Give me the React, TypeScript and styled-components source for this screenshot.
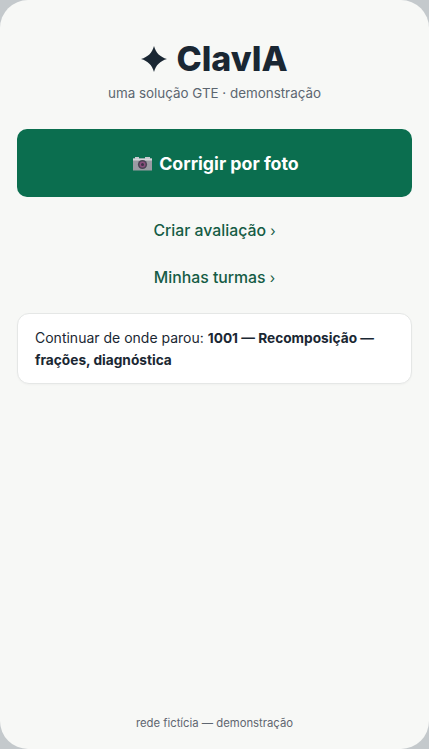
import styled, { createGlobalStyle } from "styled-components"

const GlobalStyle = createGlobalStyle`
    html, body {
        margin: 0;
        padding: 0;
        height: 100%;
        background: #c4c9cc;
    }
    #root {
        height: 100%;
    }
`

function Sparkle() {
    return (
        <svg width="26" height="26" viewBox="0 0 26 26">
            <path d="M13 0 C15 7 19 11 26 13 C19 15 15 19 13 26 C11 19 7 15 0 13 C7 11 11 7 13 0 Z" fill="#1a2733" />
        </svg>
    )
}

function CameraIcon() {
    return (
        <svg width="19" height="15" viewBox="0 0 19 15">
            <rect x="0" y="2.5" width="19" height="12" fill="#9a9ba3" />
            <rect x="0" y="2.5" width="19" height="2" fill="#d5d6da" />
            <rect x="2" y="1" width="4" height="2" fill="#c9cad0" />
            <rect x="12" y="1" width="5" height="2" fill="#c9cad0" />
            <circle cx="9.5" cy="8.5" r="4.6" fill="#4c4455" />
            <circle cx="9.5" cy="8.5" r="3" fill="#8a4f7d" />
            <circle cx="9.5" cy="8.5" r="1.5" fill="#3c3346" />
        </svg>
    )
}

export default function App() {
    return (
        <>
            <GlobalStyle />
            <Phone>
                <Header>
                    <Title><Sparkle />ClavIA</Title>
                    <Subtitle>uma solução GTE · demonstração</Subtitle>
                </Header>
                <PrimaryButton type="button"><CameraIcon />Corrigir por foto</PrimaryButton>
                <LinkButton type="button">Criar avaliação <Chevron>›</Chevron></LinkButton>
                <LinkButton type="button">Minhas turmas <Chevron>›</Chevron></LinkButton>
                <ResumeCard>
                    Continuar de onde parou: <strong>1001 — Recomposição — frações, diagnóstica</strong>
                </ResumeCard>
                <Footer>rede fictícia — demonstração</Footer>
            </Phone>
        </>
    )
}

const Phone = styled.div`
    box-sizing: border-box;
    height: 749px;
    width: 429px;
    padding: 38px 17px 18px;
    display: flex;
    flex-direction: column;
    background: #f7f8f6;
    border-radius: 28px;
    font-family: Inter, "Liberation Sans", sans-serif;
    color: #1a2733;
`

const Header = styled.header`
    display: flex;
    flex-direction: column;
    align-items: center;
    margin-bottom: 27px;
`

const Title = styled.h1`
    display: flex;
    align-items: center;
    gap: 9px;
    margin: 0;
    font-size: 34px;
    line-height: 41px;
    font-weight: 800;
    color: #1a2733;
`

const Subtitle = styled.p`
    margin: 5px 0 0;
    font-size: 13.4px;
    line-height: 18px;
    color: #5c6670;
`

const PrimaryButton = styled.button`
    display: flex;
    align-items: center;
    justify-content: center;
    gap: 7px;
    height: 68px;
    padding: 0 0 0 3px;
    border: none;
    border-radius: 10px;
    background: #0b6e4f;
    color: #ffffff;
    font-family: inherit;
    font-size: 17.8px;
    font-weight: 700;
    margin-bottom: 9px;
`

const LinkButton = styled.button`
    height: 47px;
    padding: 2px 0 0;
    border: none;
    background: transparent;
    color: #155c45;
    font-family: inherit;
    font-size: 15.8px;
    font-weight: 500;
`

const Chevron = styled.span`
    font-size: 14px;
    font-weight: 400;
`

const ResumeCard = styled.div`
    margin-top: 13px;
    padding: 13px 17px 12px;
    background: #ffffff;
    border: 1px solid #e5e7e6;
    border-radius: 12px;
    box-shadow: 0 1px 2px rgba(0, 0, 0, 0.03);
    font-size: 14px;
    line-height: 21px;
    color: #1a2733;

    strong {
        font-size: 13.7px;
        font-weight: 700;
    }
`

const Footer = styled.footer`
    margin-top: auto;
    text-align: center;
    font-size: 11.3px;
    line-height: 15px;
    color: #5f6670;
`
